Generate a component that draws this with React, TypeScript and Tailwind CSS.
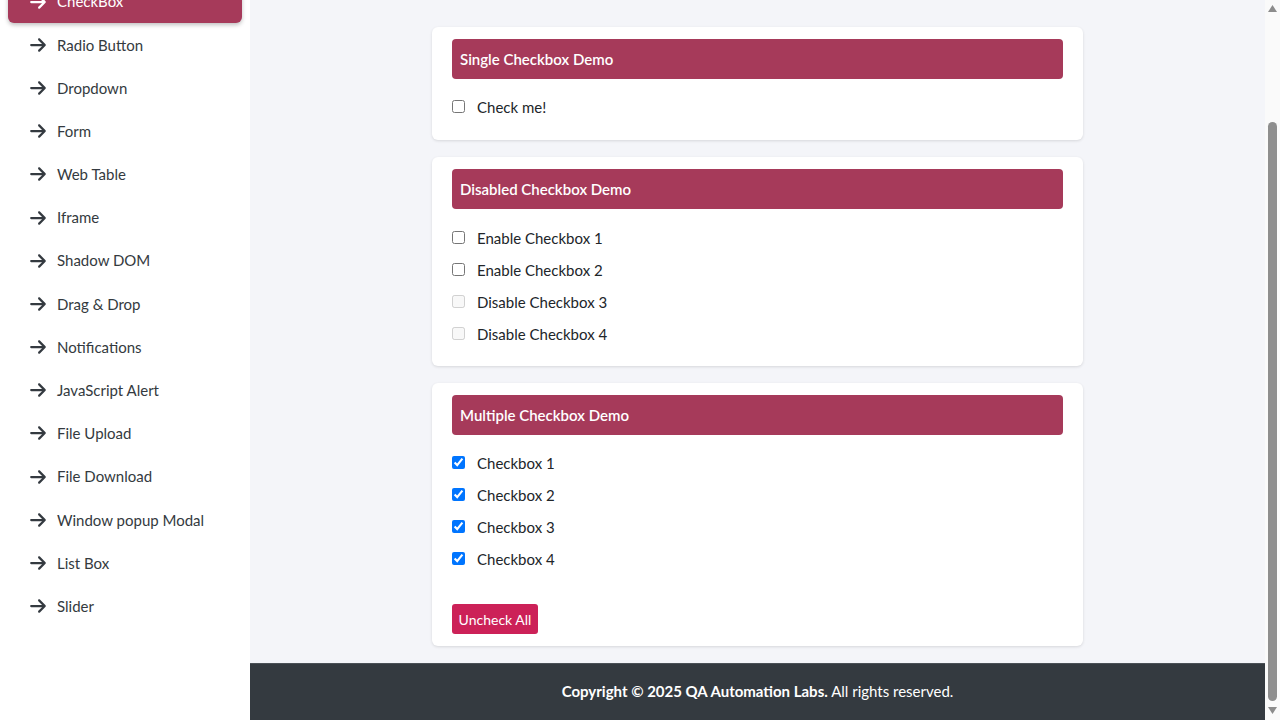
import { useLayoutEffect } from "react";

const NAV = [
  "CheckBox",
  "Radio Button",
  "Dropdown",
  "Form",
  "Web Table",
  "Iframe",
  "Shadow DOM",
  "Drag & Drop",
  "Notifications",
  "JavaScript Alert",
  "File Upload",
  "File Download",
  "Window popup Modal",
  "List Box",
  "Slider",
];

const font = { fontFamily: "Lato, 'Open Sans', sans-serif" };

function Arrow() {
  return (
    <svg width="16" height="18" viewBox="0 0 448 512" fill="currentColor" className="shrink-0">
      <path d="M438.6 278.6c12.5-12.5 12.5-32.8 0-45.3l-160-160c-12.5-12.5-32.8-12.5-45.3 0s-12.5 32.8 0 45.3L338.8 224 32 224c-17.7 0-32 14.3-32 32s14.3 32 32 32l306.7 0L233.4 393.4c-12.5 12.5-12.5 32.8 0 45.3s32.8 12.5 45.3 0l160-160z" />
    </svg>
  );
}

function CardHeader({ title }: { title: string }) {
  return (
    <div className="h-10 rounded bg-[#a63a5a] pl-2 flex items-center text-[15px] font-semibold text-white">
      {title}
    </div>
  );
}

function Row({ label, checked, disabled }: { label: string; checked?: boolean; disabled?: boolean }) {
  return (
    <label className="h-8 flex items-center gap-3 text-[15px] text-[#212529]">
      <input type="checkbox" defaultChecked={checked} disabled={disabled} className="w-[13px] h-[13px] -mt-0.5" />
      {label}
    </label>
  );
}

// browser scrollbar as it appears in the shot (page scrolled to the bottom)
function Scrollbar() {
  return (
    <div className="fixed right-0 top-0 w-[15px] h-screen bg-[#fafafa] flex flex-col items-center">
      <svg width="9" height="15" viewBox="0 0 9 15" className="shrink-0">
        <polygon points="4.5,5 9,12 0,12" fill="#8c8c8c" />
      </svg>
      <div className="h-[107px] shrink-0" />
      <div className="w-[9px] h-[579px] rounded-full bg-[#8e8e8e]" />
      <div className="flex-1" />
      <svg width="9" height="15" viewBox="0 0 9 15" className="shrink-0">
        <polygon points="0,2 9,2 4.5,9" fill="#8c8c8c" />
      </svg>
    </div>
  );
}

export default function App() {
  useLayoutEffect(() => {
    window.scrollTo(0, document.documentElement.scrollHeight);
  }, []);

  return (
    <div style={font}>
      <div className="flex min-h-screen mr-[15px] bg-[#f4f5f9]">
        <aside className="w-[250px] shrink-0 bg-white pt-[121px]">
          {NAV.map((item, i) => (
            <div
              key={item}
              className={
                i === 0
                  ? "mx-2 h-[43.2px] flex items-center gap-[11px] pl-[22px] rounded-md bg-[#a63a5a] text-white shadow-[0_2px_4px_rgba(0,0,0,0.25)]"
                  : "mx-2 h-[43.2px] flex items-center gap-[11px] pl-[22px] text-[#343a40]"
              }
            >
              <Arrow />
              <span className="text-[15px]">{item}</span>
            </div>
          ))}
        </aside>

        <div className="flex-1 flex flex-col">
          <main className="flex-1 pt-[168px] pb-[17px]">
            <div className="w-[651px] mx-auto flex flex-col gap-[17px]">
              <section className="bg-white rounded-md shadow-[0_1px_3px_rgba(0,0,0,0.12)] px-5 pt-3 pb-[17px]">
                <CardHeader title="Single Checkbox Demo" />
                <div className="mt-3">
                  <Row label="Check me!" />
                </div>
              </section>

              <section className="bg-white rounded-md shadow-[0_1px_3px_rgba(0,0,0,0.12)] px-5 pt-3 pb-4">
                <CardHeader title="Disabled Checkbox Demo" />
                <div className="mt-[13px]">
                  <Row label="Enable Checkbox 1" />
                  <Row label="Enable Checkbox 2" />
                  <Row label="Disable Checkbox 3" disabled />
                  <Row label="Disable Checkbox 4" disabled />
                </div>
              </section>

              <section className="bg-white rounded-md shadow-[0_1px_3px_rgba(0,0,0,0.12)] px-5 pt-3 pb-3">
                <CardHeader title="Multiple Checkbox Demo" />
                <div className="mt-3">
                  <Row label="Checkbox 1" checked />
                  <Row label="Checkbox 2" checked />
                  <Row label="Checkbox 3" checked />
                  <Row label="Checkbox 4" checked />
                </div>
                <button className="mt-[29px] h-[30px] w-[86px] rounded-[3px] bg-[#cc2158] text-white text-[14px]">
                  Uncheck All
                </button>
              </section>
            </div>
          </main>

          <footer className="h-[57px] bg-[#343a40] border-t border-[#4b5157] flex items-center justify-center pb-px text-[15px] text-white">
            <span>
              <b>Copyright © 2025 QA Automation Labs.</b> All rights reserved.
            </span>
          </footer>
        </div>
      </div>
      <Scrollbar />
    </div>
  );
}
